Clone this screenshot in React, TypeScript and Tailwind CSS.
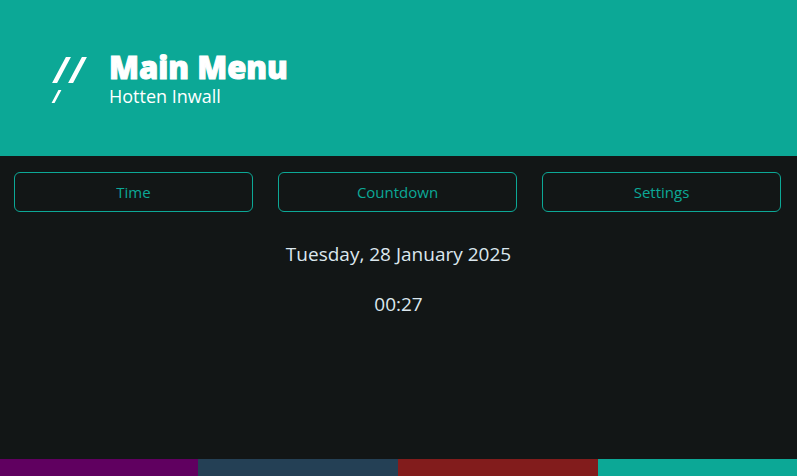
import React from "react";

export default function App() {
  const font = { fontFamily: '"Open Sans", "Noto Sans", sans-serif' };
  return (
    <div className="w-[797px] h-[476px] flex flex-col bg-[#121616] overflow-hidden" style={font}>
      <div className="h-[156px] bg-[#0ca896] flex items-start pl-[52px] pt-[57px] shrink-0">
        <div className="w-[57px] flex flex-col" aria-label="///">
          <div className="flex gap-[11px] pl-[7px] h-[26px]">
            <div className="w-[5px] h-[26px] bg-white -skew-x-[28deg]" />
            <div className="w-[5px] h-[26px] bg-white -skew-x-[28deg]" />
          </div>
          <div className="mt-[7px] pl-[3px]">
            <div className="w-[2.5px] h-[13px] bg-white -skew-x-[28deg]" />
          </div>
        </div>
        <div className="flex flex-col text-white -mt-[7px]">
          <span
            className="text-[31px] font-black leading-[34px] [-webkit-text-stroke:1px_white]"
            style={{ fontFamily: '"Open Sans", sans-serif' }}
          >
            Main Menu
          </span>
          <span className="text-[18px] leading-[22px] mt-[1px]">Hotten Inwall</span>
        </div>
      </div>
      <div className="flex-1 flex flex-col">
        <div className="flex gap-[25px] pl-[14px] pr-[16px] pt-[16px]">
          {["Time", "Countdown", "Settings"].map((t) => (
            <button
              key={t}
              className="flex-1 h-[40px] rounded-[6px] border border-[#0ca896] text-[#0ca896] text-[15px] flex items-center justify-center"
            >
              {t}
            </button>
          ))}
        </div>
        <div className="text-center text-[#dbe7ee] text-[19px] mt-[29px] leading-[26px]">Tuesday, 28 January 2025</div>
        <div className="text-center text-[#dbe7ee] text-[19px] mt-[24px] leading-[26px]">00:27</div>
      </div>
      <div className="h-[17px] flex shrink-0">
        <div className="w-[198px] bg-[#600060]" />
        <div className="w-[200px] bg-[#244055]" />
        <div className="w-[200px] bg-[#821c1c]" />
        <div className="flex-1 bg-[#0ca896]" />
      </div>
    </div>
  );
}
